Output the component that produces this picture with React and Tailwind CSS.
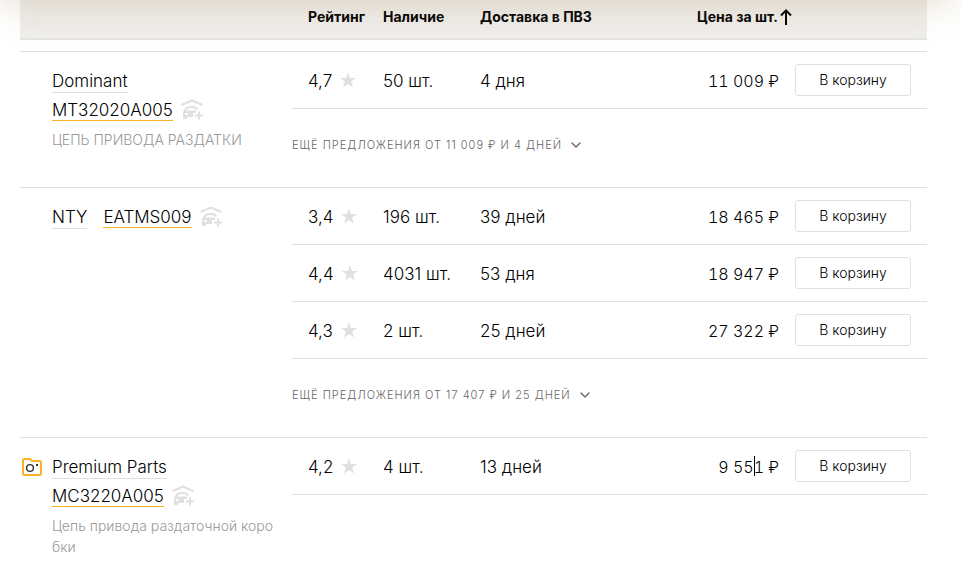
import React from 'react';
import { ChevronDown } from 'lucide-react';

const groups = [
  {
    brand: 'Dominant',
    article: 'MT32020A005',
    description: 'ЦЕПЬ ПРИВОДА РАЗДАТКИ',
    offers: [{ rating: '4,7', stock: '50 шт.', delivery: '4 дня', price: '11 009 ₽' }],
    more: 'Ещё предложения от 11 009 ₽ и 4 дней',
  },
  {
    brand: 'NTY',
    article: 'EATMS009',
    offers: [
      { rating: '3,4', stock: '196 шт.', delivery: '39 дней', price: '18 465 ₽' },
      { rating: '4,4', stock: '4031 шт.', delivery: '53 дня', price: '18 947 ₽' },
      { rating: '4,3', stock: '2 шт.', delivery: '25 дней', price: '27 322 ₽' },
    ],
    more: 'Ещё предложения от 17 407 ₽ и 25 дней',
  },
  {
    brand: 'Premium Parts',
    article: 'MC3220A005',
    description: 'Цепь привода раздаточной коробки',
    photo: true,
    offers: [{ rating: '4,2', stock: '4 шт.', delivery: '13 дней', price: '9 551 ₽', caret: true }],
  },
];

function StarIcon() {
  return (
    <svg viewBox="0 0 16 16" className="size-4 shrink-0 fill-[#e0e0e0]" aria-hidden="true">
      <path d="M8 0l2 5.9h6l-4.900 3.700 1.900 6L8 12l-5 3.600 1.900-6L0 5.900h6z" />
    </svg>
  );
}

function SortIcon() {
  return (
    <svg viewBox="0 0 12 16" className="h-4 w-3" fill="none" stroke="#000" strokeWidth="2" aria-hidden="true">
      <path d="M6 16V1.500M1 6.500l5-5 5 5" />
    </svg>
  );
}

function CameraIcon() {
  return (
    <svg viewBox="0 0 20 18" className="h-[18px] w-5" fill="none" aria-hidden="true">
      <path
        d="M2.500 1h5.700l2 2h7.300A1.500 1.500 0 0 1 19 4.500v11a1.500 1.500 0 0 1-1.500 1.500h-15A1.500 1.500 0 0 1 1 15.500v-13A1.500 1.500 0 0 1 2.500 1z"
        stroke="#fcb026"
        strokeWidth="2"
      />
      <circle cx="8" cy="10" r="3.400" stroke="#333" strokeWidth="1.400" />
      <rect x="14" y="6" width="2" height="2" fill="#333" />
    </svg>
  );
}

function GarageIcon() {
  return (
    <svg viewBox="0 0 22 21" className="h-[21px] w-[22px]" fill="none" aria-hidden="true">
      <path d="M.500 6L11 1.500 21.500 6" stroke="#e0e0e0" strokeWidth="2" />
      <path d="M3.500 12.500L5 9.800Q6.500 8 10.500 8t6 2.500" stroke="#e0e0e0" strokeWidth="2" />
      <path
        d="M2 13.500Q2 11.500 4 11.500h11v2.500h-3v4H6v2H2zM4 14v2h2.500v-2z"
        fill="#e0e0e0"
        fillRule="evenodd"
      />
      <path d="M18 12.500v8M14 16.500h8" stroke="#e0e0e0" strokeWidth="2" />
    </svg>
  );
}

function Product({ group }) {
  return (
    <div className="flex pt-[14px] pb-4">
      <div className="w-8 shrink-0 pt-[6px] pl-[2px]">{group.photo && <CameraIcon />}</div>
      <div className="w-[224px]">
        <div className="flex flex-wrap gap-x-4 leading-[30px]">
          <a href="#" className="h-[29px]">
            <span className="inline-block h-[27px] border-b border-[#e0e0e0]">{group.brand}</span>
          </a>
          <span className="flex h-[29px] gap-2">
            <a href="#">
              <span className="inline-block h-[26px] border-b border-[#fcb026]">{group.article}</span>
            </a>
            <button type="button" aria-label="Добавить в гараж" className="flex h-[29px] items-start pt-1">
              <GarageIcon />
            </button>
          </span>
        </div>
        {group.description && (
          <p className="mt-[5px] text-sm leading-[21px] break-all text-[#999]">{group.description}</p>
        )}
      </div>
    </div>
  );
}

function OfferCells({ offer }) {
  return (
    <>
      <td className="border-b border-[#e0e0e0] pl-4">
        <span className="flex items-center gap-2">
          <span className="pt-[2px]">{offer.rating}</span>
          <StarIcon />
        </span>
      </td>
      <td className="border-b border-[#e0e0e0] pt-[2px]">{offer.stock}</td>
      <td className="border-b border-[#e0e0e0] pt-[2px]">{offer.delivery}</td>
      <td className="relative border-b border-[#e0e0e0] pt-[2px] text-right text-base leading-6 tabular-nums">
        {offer.price}
        {offer.caret && <span className="absolute top-[18px] right-6 h-5 w-px bg-black" />}
      </td>
      <td className="border-b border-[#e0e0e0] pr-4 pl-4">
        <button
          type="button"
          className="block h-8 w-full rounded-[3px] border border-[#e0e0e0] bg-white text-sm"
        >
          В корзину
        </button>
      </td>
    </>
  );
}

function ProductGroup({ group }) {
  const [first, ...rest] = group.offers;
  return (
    <tbody className="border-t border-[#e0e0e0]">
      <tr className="h-[57px]">
        <td rowSpan={group.offers.length + 1} className="align-top">
          <Product group={group} />
        </td>
        <OfferCells offer={first} />
      </tr>
      {rest.map((offer) => (
        <tr key={offer.rating} className="h-[57px]">
          <OfferCells offer={offer} />
        </tr>
      ))}
      <tr className="h-[79px]">
        <td colSpan={5} className="align-top pt-[26px]">
          {group.more && (
            <button
              type="button"
              className="flex items-center gap-[6px] text-[11px] leading-5 tracking-[1px] text-[#666] uppercase"
            >
              {group.more}
              <ChevronDown className="size-4" />
            </button>
          )}
        </td>
      </tr>
    </tbody>
  );
}

export default function App() {
  return (
    <div className="relative overflow-hidden bg-white pr-[34px] pl-5 font-['Inter',sans-serif] text-[17px] leading-6 font-light text-black">
      <table className="w-full table-fixed border-collapse">
        <colgroup>
          <col className="w-[272px]" />
          <col className="w-[91px]" />
          <col className="w-[97px]" />
          <col className="w-[150px]" />
          <col />
          <col className="w-[148px]" />
        </colgroup>
        <thead className="text-left text-sm leading-5">
          <tr className="h-[39px] border-b-2 border-[#e3e3e3] bg-[#f0eeeb]">
            <th />
            <th className="pb-1 pl-4 font-bold">Рейтинг</th>
            <th className="pb-1 font-bold">Наличие</th>
            <th className="pb-1 font-bold">Доставка в ПВЗ</th>
            <th colSpan={2} className="pb-1 pl-[67px] font-bold">
              <button type="button" className="flex items-center gap-[2px]">
                Цена за шт.
                <SortIcon />
              </button>
            </th>
          </tr>
          <tr className="h-3">
            <td colSpan={6} />
          </tr>
        </thead>
        {groups.map((group) => (
          <ProductGroup key={group.article} group={group} />
        ))}
      </table>
      <div className="pointer-events-none absolute right-3 left-0 top-0 -mt-10 h-10 shadow-[0_0_40px_rgba(165,145,100,0.38)]" />
    </div>
  );
}
